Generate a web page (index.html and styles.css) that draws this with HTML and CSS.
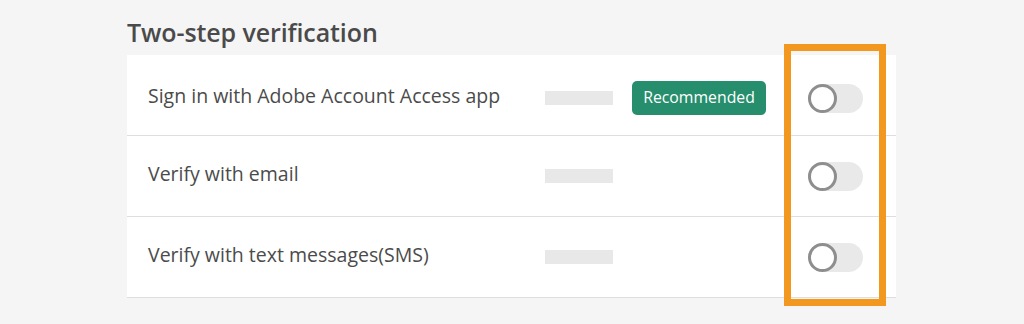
FILE: index.html
```html
<!DOCTYPE html>
<html lang="en">
<head>
    <meta charset="UTF-8">
    <meta name="viewport" content="width=device-width, initial-scale=1.0">
    <title>Two-step verification</title>
    <link rel="stylesheet" href="styles.css">
</head>
<body>
    <div class="container">
        <h2 class="section-title">Two-step verification</h2>

        <div class="card">
            <div class="row row-first">
                <span class="label">Sign in with Adobe Account Access app</span>
                <span class="placeholder"></span>
                <span class="badge">Recommended</span>
                <span class="toggle"><span class="knob"></span></span>
            </div>
            <div class="row">
                <span class="label">Verify with email</span>
                <span class="placeholder"></span>
                <span class="toggle"><span class="knob"></span></span>
            </div>
            <div class="row">
                <span class="label">Verify with text messages(SMS)</span>
                <span class="placeholder"></span>
                <span class="toggle"><span class="knob"></span></span>
            </div>

            <!-- highlight round the toggle column -->
            <div class="highlight"></div>
        </div>
    </div>
</body>
</html>
```

FILE: styles.css
```css
* {
    margin: 0;
    padding: 0;
    box-sizing: border-box;
    font-family: 'Open Sans', sans-serif;
}

body {
    background: #f5f5f5;
    min-height: 100vh;
}

.container {
    padding: 15px 0 0 127px;
    width: 896px;
}

.section-title {
    font-size: 25px;
    font-weight: 600;
    color: #4a4a4a;
    line-height: 34px;
    height: 40px;
    letter-spacing: -0.1px;
}

.card {
    position: relative;
    background: white;
}

.row {
    display: flex;
    align-items: center;
    height: 81px;
    padding: 0 33px 0 21px;
    border-bottom: 1px solid #dedede;
}

.row-first {
    padding-top: 6px;
}

.row:last-of-type {
    height: 80px;
    border-bottom: none;
}

.label {
    width: 397px;
    padding-bottom: 5px;
    font-size: 19.5px;
    color: #4b4b4b;
}

.placeholder {
    width: 68px;
    height: 14px;
    background: #e8e8e8;
}

.badge {
    margin-left: 19px;
    width: 134px;
    height: 34px;
    line-height: 33px;
    text-align: center;
    background: #268e6c;
    color: white;
    font-size: 15.8px;
    border-radius: 5px;
}

.toggle {
    margin-left: auto;
    width: 55px;
    height: 29px;
    border-radius: 15px;
    background: #e9e9e9;
}

.knob {
    display: block;
    width: 29px;
    height: 29px;
    border-radius: 50%;
    border: 3px solid #8e8e8e;
    background: white;
}

.highlight {
    position: absolute;
    top: -11px;
    left: 657px;
    width: 102px;
    height: 262px;
    border: 7px solid #f2981f;
}
```
